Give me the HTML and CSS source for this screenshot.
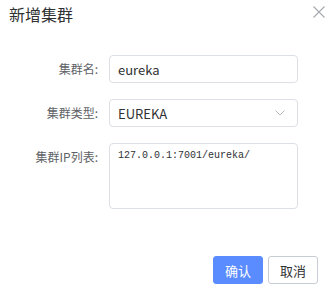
FILE: index.html
```html
<!DOCTYPE html>
<html lang="zh">
<head>
    <meta charset="UTF-8">
    <title>新增集群</title>
    <link rel="stylesheet" href="styles.css">
</head>
<body>
    <div class="dialog">
        <div class="dialog-header">
            <span class="dialog-title">新增集群</span>
            <svg class="close" width="12" height="12" viewBox="0 0 12 12">
                <path d="M0.5 0.5L11.5 11.5M11.5 0.5L0.5 11.5" stroke="#a8abb2" stroke-width="1.2" fill="none"/>
            </svg>
        </div>
        <div class="dialog-body">
            <div class="form-row">
                <label class="form-label">集群名:</label>
                <input class="form-input" type="text" value="eureka">
            </div>
            <div class="form-row">
                <label class="form-label">集群类型:</label>
                <div class="form-select">
                    <span>EUREKA</span>
                    <svg width="10" height="6" viewBox="0 0 10 6">
                        <path d="M0.5 0.5L5 5L9.5 0.5" stroke="#b4b8c0" stroke-width="1" fill="none"/>
                    </svg>
                </div>
            </div>
            <div class="form-row">
                <label class="form-label">集群IP列表:</label>
                <textarea class="form-textarea">127.0.0.1:7001/eureka/</textarea>
            </div>
        </div>
        <div class="dialog-footer">
            <button class="btn btn-primary">确认</button>
            <button class="btn">取消</button>
        </div>
    </div>
</body>
</html>
```

FILE: styles.css
```css
body {
    margin: 0;
    background: #fff;
    font-family: "Noto Sans CJK SC", "Noto Sans", sans-serif;
    color: #303133;
}
.dialog {
    width: 333px;
    height: 294px;
    box-sizing: border-box;
    display: flex;
    flex-direction: column;
}
.dialog-header {
    display: flex;
    justify-content: space-between;
    align-items: flex-start;
    padding: 3px 8px 0 9px;
}
.dialog-title {
    font-size: 16px;
    line-height: 22px;
    color: #303133;
}
.close {
    margin-top: 3px;
}
.dialog-body {
    padding-top: 30px;
    display: flex;
    flex-direction: column;
    gap: 16px;
}
.form-row {
    display: flex;
    align-items: flex-start;
}
.form-label {
    width: 98px;
    margin-right: 11px;
    text-align: right;
    font-size: 12px;
    line-height: 28px;
    color: #606266;
}
.form-input,
.form-select,
.form-textarea {
    width: 189px;
    box-sizing: border-box;
    border: 1px solid #dcdfe6;
    border-radius: 4px;
    background: #fff;
    color: #303133;
    outline: none;
}
.form-input {
    height: 28px;
    padding: 0 8px;
    font-family: "Noto Sans CJK SC", sans-serif;
    font-size: 13px;
}
.form-select {
    height: 28px;
    padding: 0 12px 0 8px;
    display: flex;
    align-items: center;
    justify-content: space-between;
    font-size: 13px;
}
.form-textarea {
    height: 66px;
    padding: 5px 8px;
    resize: none;
    font-family: "Liberation Mono", monospace;
    font-size: 10px;
    line-height: 14px;
}
.dialog-footer {
    margin-top: auto;
    display: flex;
    justify-content: flex-end;
    gap: 5px;
    padding: 0 15px 10px 0;
}
.btn {
    width: 50px;
    height: 28px;
    box-sizing: border-box;
    border: 1px solid #c8ccd4;
    border-radius: 3px;
    background: #fff;
    color: #303133;
    font-family: "Noto Sans CJK SC", sans-serif;
    font-size: 13px;
    padding: 0;
}
.btn-primary {
    background: #5a8cff;
    border-color: #5a8cff;
    color: #fff;
}
```
